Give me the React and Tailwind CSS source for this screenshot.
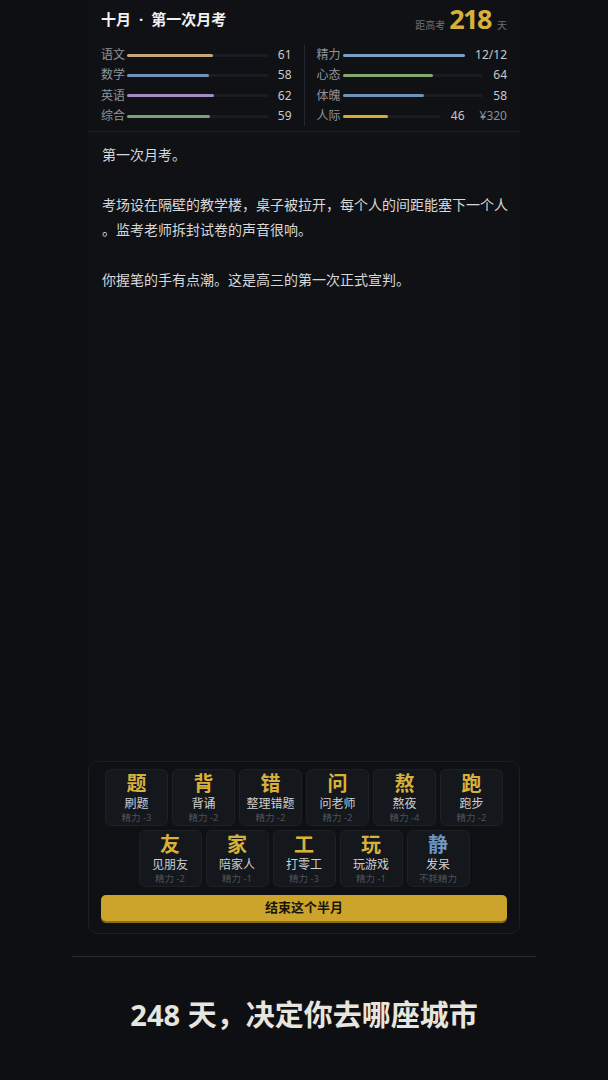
const subjects = [
  { name: "语文", value: 61, pct: 61, color: "bg-[#c6a67a]" },
  { name: "数学", value: 58, pct: 58, color: "bg-[#6f93b6]" },
  { name: "英语", value: 62, pct: 62, color: "bg-[#a58bc2]" },
  { name: "综合", value: 59, pct: 59, color: "bg-[#7d9e7a]" },
];

const status = [
  { name: "精力", value: "12/12", pct: 100, color: "bg-[#7a9fc6]" },
  { name: "心态", value: "64", pct: 64, color: "bg-[#86a86a]" },
  { name: "体魄", value: "58", pct: 58, color: "bg-[#6f93b6]" },
  { name: "人际", value: "46", pct: 46, color: "bg-[#d3ae2f]", extra: "¥320" },
];

const actionsTop = [
  { char: "题", label: "刷题", cost: "精力 -3" },
  { char: "背", label: "背诵", cost: "精力 -2" },
  { char: "错", label: "整理错题", cost: "精力 -2" },
  { char: "问", label: "问老师", cost: "精力 -2" },
  { char: "熬", label: "熬夜", cost: "精力 -4" },
  { char: "跑", label: "跑步", cost: "精力 -2" },
];

const actionsBottom = [
  { char: "友", label: "见朋友", cost: "精力 -2" },
  { char: "家", label: "陪家人", cost: "精力 -1" },
  { char: "工", label: "打零工", cost: "精力 -3" },
  { char: "玩", label: "玩游戏", cost: "精力 -1" },
  { char: "静", label: "发呆", cost: "不耗精力", calm: true },
];

const StatRow = ({ stat }) => (
  <div className="flex items-center h-[20.3px] text-[12px]">
    <span className="text-[#8f939b] w-[24px] shrink-0">{stat.name}</span>
    <div className="flex-1 ml-[2px] h-[3px] rounded-full bg-[#1a1c21]">
      <div className={`h-full rounded-full ${stat.color}`} style={{ width: `${stat.pct}%` }} />
    </div>
    <span className="ml-[10px] text-right text-[#c9c9c9]">{stat.value}</span>
    {stat.extra && <span className="ml-[15px] text-[#8a8d94]">{stat.extra}</span>}
  </div>
);

const ActionButton = ({ action }) => (
  <button className="w-[63px] h-[57px] flex flex-col items-center pt-[3px] rounded-md bg-[#14171c] border border-[#1d2127]">
    <span
      className={`text-[20px] font-bold leading-[22px] ${action.calm ? "text-[#6f95c6]" : "text-[#d8b13a]"}`}
    >
      {action.char}
    </span>
    <span className="text-[12px] leading-[16px] text-[#cfcfcf] mt-[1px]">{action.label}</span>
    <span className="text-[9.5px] leading-[12px] text-[#4d5159]">{action.cost}</span>
  </button>
);

export default function App() {
  return (
    <div className="min-h-[1080px] bg-[#0e0f12] font-['Noto_Sans','Noto_Sans_CJK_SC',sans-serif] flex flex-col items-center">
      <div className="w-[432px] h-[934px] bg-[#101115] rounded-b-[10px] flex flex-col">
        {/* header */}
        <div className="flex items-end justify-between pl-[13px] pr-[13px] h-[36px]">
          <h1 className="text-[15px] font-bold text-[#f1f1f1] leading-[22px] mb-[6px]">
            十月<span className="px-[8px]">·</span>第一次月考
          </h1>
          <div className="flex items-baseline mb-[3px]">
            <span className="text-[10px] text-[#6b6f77] mr-[4px]">距高考</span>
            <span className="text-[27px] font-bold text-[#d8b13a] leading-none tracking-[-1.5px]">218</span>
            <span className="text-[10px] text-[#6b6f77] ml-[6px]">天</span>
          </div>
        </div>

        {/* stats */}
        <div className="flex px-[13px] pt-[9px] pb-[5px] border-b border-[#1d1f24]">
          <div className="w-[191px]">
            {subjects.map((s) => (
              <StatRow key={s.name} stat={s} />
            ))}
          </div>
          <div className="mx-[12px] border-l border-[#25282e]" />
          <div className="w-[191px]">
            {status.map((s) => (
              <StatRow key={s.name} stat={s} />
            ))}
          </div>
        </div>

        {/* narrative */}
        <div className="flex-1 pl-[14px] pr-[10px] pt-[10px] text-[14px] leading-[25px] text-[#d8d8d8] [line-break:anywhere]">
          <p>第一次月考。</p>
          <p className="mt-[25px]">考场设在隔壁的教学楼，桌子被拉开，每个人的间距能塞下一个人。监考老师拆封试卷的声音很响。</p>
          <p className="mt-[25px]">你握笔的手有点潮。这是高三的第一次正式宣判。</p>
        </div>

        {/* actions */}
        <div className="rounded-[10px] border border-[#1c1e23] bg-[#0f1014] px-[12px] pt-[7px] pb-[12px]">
          <div className="flex justify-center gap-[4px]">
            {actionsTop.map((a) => (
              <ActionButton key={a.char} action={a} />
            ))}
          </div>
          <div className="flex justify-center gap-[4px] mt-[4px]">
            {actionsBottom.map((a) => (
              <ActionButton key={a.char} action={a} />
            ))}
          </div>
          <button className="mt-[8px] w-full h-[26px] rounded-[5px] bg-[#cda42b] text-[13px] font-bold text-[#1a1608] shadow-[0_2px_0_#8a6d15]">
            结束这个半月
          </button>
        </div>
      </div>

      <div className="w-[464px] mt-[22px] border-t border-[#2a2c31]" />

      <h2 className="mt-[38px] text-[29px] font-bold text-[#e7e5df] leading-[40px]">248 天，决定你去哪座城市</h2>
    </div>
  );
}
